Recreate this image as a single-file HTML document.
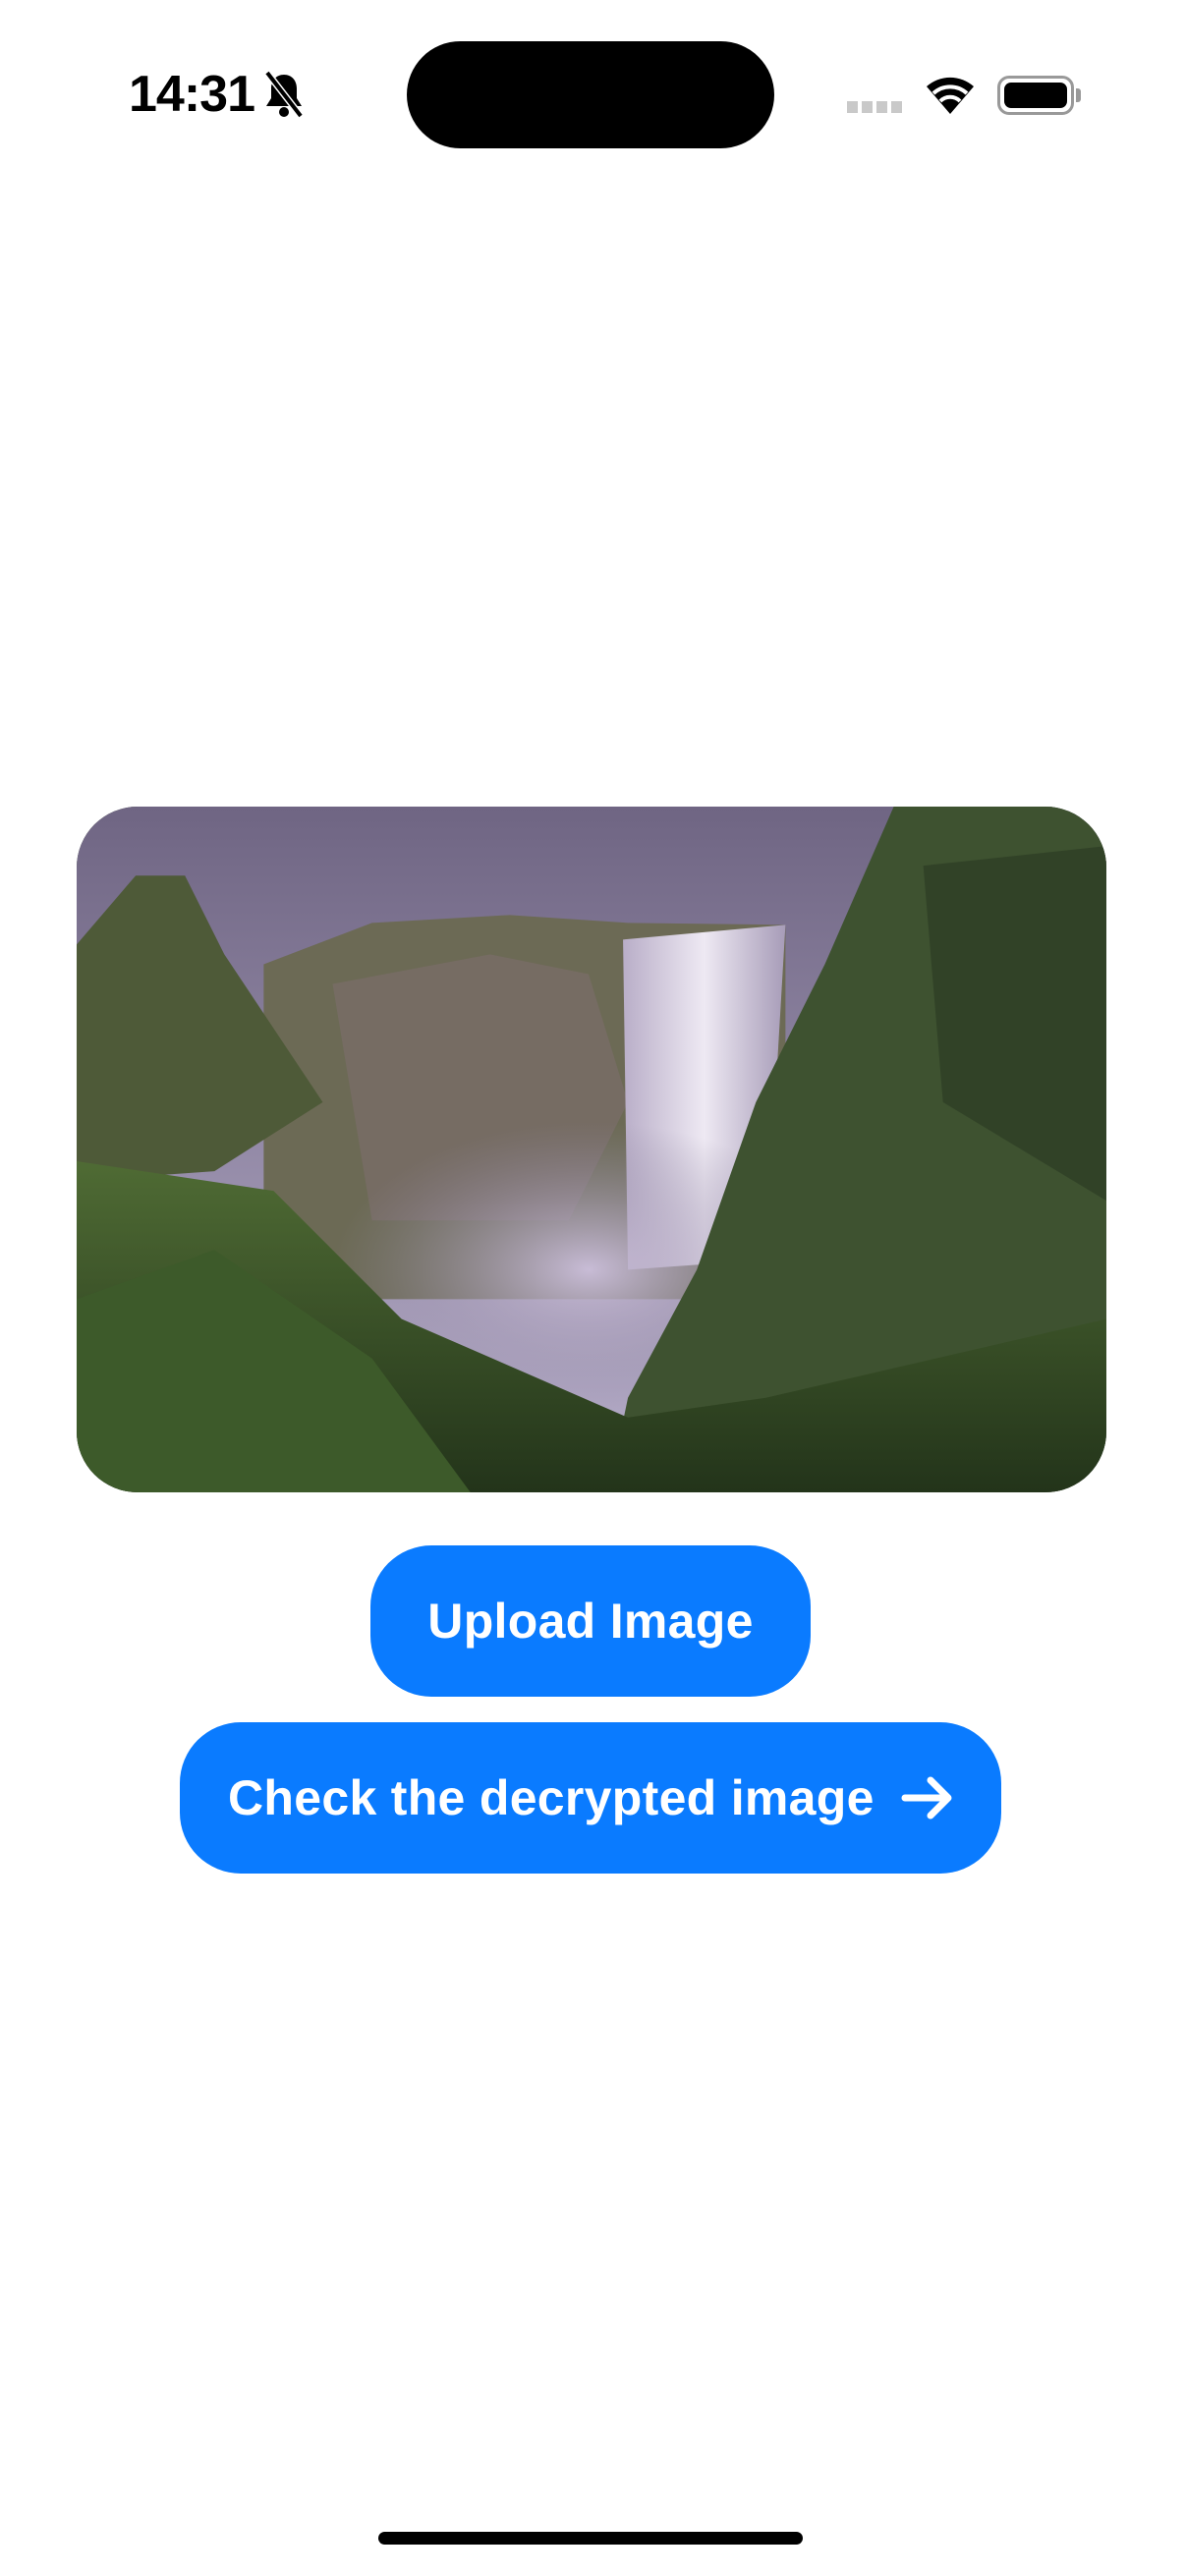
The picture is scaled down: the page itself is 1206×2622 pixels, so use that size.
<!DOCTYPE html>
<html><head><meta charset="utf-8"><style>
*{margin:0;padding:0;box-sizing:border-box}
body{width:1206px;height:2622px;background:#fff;position:relative;overflow:hidden;font-family:"Liberation Sans",sans-serif}
.time{position:absolute;left:131px;top:66px;font-size:52px;font-weight:700;color:#000;letter-spacing:-1px}
.island{position:absolute;left:414px;top:42px;width:374px;height:109px;background:#000;border-radius:55px}
.card{position:absolute;left:78px;top:821px;width:1048px;height:698px;border-radius:62px;overflow:hidden;background:#3a4a2c}
.btn{position:absolute;background:#0a7bff;color:#fff;font-weight:700;font-size:50px;display:flex;align-items:center;justify-content:center;border-radius:62px;letter-spacing:0.3px}
.home{position:absolute;left:385px;top:2577px;width:432px;height:13px;background:#000;border-radius:7px}
</style></head><body>
<div class="time">14:31</div>
<svg style="position:absolute;left:266px;top:72px" width="46" height="50" viewBox="0 0 46 50"><path d="M23 4c-8 0-13 6-13 14v10l-5 8h36l-5-8V18c0-8-5-14-13-14z" fill="#000"/><circle cx="23" cy="42" r="5" fill="#000"/><path d="M6 2l34 44" stroke="#fff" stroke-width="7"/><path d="M6 2l34 44" stroke="#000" stroke-width="4"/></svg>
<div class="island"></div>
<div style="position:absolute;left:862px;top:103px;width:58px;height:12px;background:repeating-linear-gradient(90deg,#c9c9c9 0 11px,transparent 11px 15px)"></div>
<svg style="position:absolute;left:940px;top:74px" width="54" height="42" viewBox="0 0 54 42"><path d="M27 42 L3 14 A36 36 0 0 1 51 14 Z" fill="#000"/><path d="M10 21 A25 25 0 0 1 44 21" stroke="#fff" stroke-width="4" fill="none"/><path d="M17 29 A14 14 0 0 1 37 29" stroke="#fff" stroke-width="4" fill="none"/></svg>
<div style="position:absolute;left:1015px;top:77px;width:78px;height:40px;border:3px solid #999;border-radius:12px;padding:4px"><div style="width:100%;height:100%;background:#000;border-radius:7px"></div></div>
<div style="position:absolute;left:1095px;top:90px;width:5px;height:14px;background:#999;border-radius:0 3px 3px 0"></div>

<div class="card">
<svg width="1048" height="698" viewBox="0 0 1046 696" preserveAspectRatio="none">
<defs>
<linearGradient id="sky" x1="0" y1="0" x2="0" y2="1"><stop offset="0" stop-color="#6f6583"/><stop offset="1" stop-color="#b9b0cc"/></linearGradient>
<linearGradient id="fall" x1="0" y1="0" x2="1" y2="0"><stop offset="0" stop-color="#b9aec8"/><stop offset=".5" stop-color="#eee9f3"/><stop offset="1" stop-color="#a79cb8"/></linearGradient>
<radialGradient id="mist" cx=".5" cy=".5" r=".5"><stop offset="0" stop-color="#c8bcd6"/><stop offset="1" stop-color="#8f86a0" stop-opacity="0"/></radialGradient>
<linearGradient id="grass" x1="0" y1="0" x2="0" y2="1"><stop offset="0" stop-color="#4f6b34"/><stop offset="1" stop-color="#23341a"/></linearGradient>
</defs>
<rect width="1046" height="696" fill="url(#sky)"/>
<path d="M190 160 L300 118 L440 110 L560 118 L720 120 L720 500 L190 500Z" fill="#6c6a55"/>
<path d="M260 180 L420 150 L520 170 L560 300 L500 420 L300 420Z" fill="#7a6e6a" opacity=".7"/>
<path d="M555 135 L720 120 L700 460 L560 470Z" fill="url(#fall)"/>
<ellipse cx="520" cy="470" rx="260" ry="150" fill="url(#mist)"/>
<path d="M830 0 L1046 0 L1046 696 L540 696 L560 600 L630 470 L690 300 L760 160Z" fill="#3e5230"/>
<path d="M860 60 L1046 40 L1046 400 L880 300Z" fill="#2e3f25" opacity=".8"/>
<path d="M0 140 L60 70 L110 70 L150 150 L250 300 L140 370 L0 380Z" fill="#4e5a38"/>
<path d="M0 360 L200 390 L330 520 L560 620 L700 600 L1046 520 L1046 696 L0 696Z" fill="url(#grass)"/>
<path d="M0 500 L140 450 L300 560 L400 696 L0 696Z" fill="#3d5a2a"/>
</svg>
</div>

<div class="btn" style="left:377px;top:1573px;width:448px;height:154px">Upload Image</div>
<div class="btn" style="left:183px;top:1753px;width:836px;height:154px;justify-content:flex-start;padding-left:49px">Check the decrypted image
<svg style="position:absolute;left:734px;top:55px" width="54" height="44" viewBox="0 0 54 44"><path d="M4 22H48M30 4L48 22L30 40" stroke="#fff" stroke-width="7" fill="none" stroke-linecap="round" stroke-linejoin="round"/></svg></div>
<div class="home"></div>
</body></html>
